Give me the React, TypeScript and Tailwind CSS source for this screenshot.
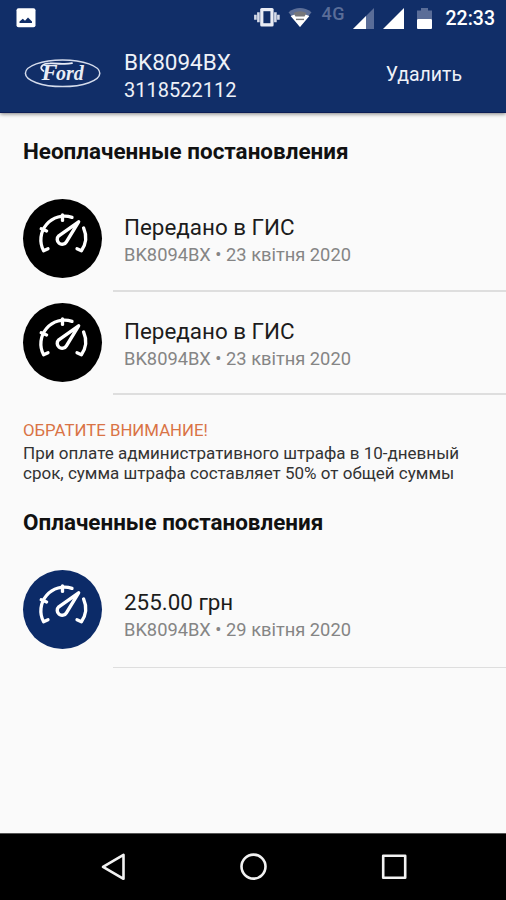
import React from 'react';

interface Fine {
    id: number;
    title: string;
    plate: string;
    date: string;
    paid: boolean;
}

const unpaid: Fine[] = [
    { id: 1, title: 'Передано в ГИС', plate: 'BK8094BX', date: '23 квітня 2020', paid: false },
    { id: 2, title: 'Передано в ГИС', plate: 'BK8094BX', date: '23 квітня 2020', paid: false },
];

const paid: Fine[] = [
    { id: 3, title: '255.00 грн', plate: 'BK8094BX', date: '29 квітня 2020', paid: true },
];

// --- ICONS ---
const GaugeIcon: React.FC = () => (
    <svg viewBox="0 0 79 79" className="w-full h-full" fill="none" stroke="#fff" strokeWidth="3.3" strokeLinecap="round" strokeLinejoin="round">
        <path d="M25 49.8 L20.6 51.8 A23.6 23.6 0 0 1 49 18.4" />
        <path d="M60.6 29 A23.6 23.6 0 0 1 58.4 51.8 L54 49.8" />
        <path d="M18.2 29.8 L23.6 32" />
        <path d="M39.5 16 V21.4" />
        <path d="M55.6 22.8 L35.8 36.8 A4.9 4.9 0 1 0 43.4 42.8 Z" strokeWidth="3.4" />
    </svg>
);

const FordLogo: React.FC = () => (
    <svg viewBox="0 0 78 30" className="w-[78px] h-[30px]">
        <ellipse cx="38.6" cy="15.3" rx="37.2" ry="13.3" fill="none" stroke="#d5dcec" strokeWidth="1.5" />
        <text y="22.4" fontFamily="'Liberation Serif', serif" fontStyle="italic" fontWeight="bold" fill="#e8ecf5">
            <tspan x="17.5" fontSize="24">F</tspan>
            <tspan x="32" fontSize="20">ord</tspan>
        </text>
        {/* flourish over the wordmark */}
        <path d="M19.5 13 C14.5 10 18 5.4 26 5.4 C35 5 40 7.2 48 5.2" fill="none" stroke="#e8ecf5" strokeWidth="1.8" strokeLinecap="round" />
    </svg>
);

// --- STATUS BAR ---
const StatusBar: React.FC = () => (
    <div className="flex items-center h-9 pl-4 pr-[11px]">
        <svg viewBox="0 0 20 20" className="w-5 h-5">
            <rect x="0.5" y="0.2" width="19" height="19" rx="2" fill="#fff" />
            <path d="M3.5 15 V13.4 L6.8 10.8 L9 12.8 L12 9.6 L16 13.4 V15 Z" fill="#112e68" />
        </svg>
        <svg viewBox="0 0 26 20" className="w-[26px] h-5 ml-auto">
            <rect x="6.2" y="0" width="13.4" height="18.4" rx="1.5" fill="#e9ecf4" />
            <rect x="9.4" y="3.2" width="7" height="12" fill="#112e68" />
            <path d="M4.4 4.2 V14.2 M21.4 4.2 V14.2 M1.4 6.7 V11.7 M24.4 6.7 V11.7" stroke="#d6dbe8" strokeWidth="2.6" />
        </svg>
        <svg viewBox="0 0 26 20" className="w-[26px] h-5 ml-[7px]">
            <path d="M1.5 4.2 Q13 -4.2 24.5 4.2 L13 19 Z" fill="#5d6f98" />
            <path d="M3.6 8 Q13 3.5 22.4 8 L13 19 Z" fill="#fff" />
            <path d="M6.5 5 Q13 1.4 19.5 5 L17.5 8.6 H8.5 Z" fill="#77777a" />
            <path d="M9 11.4 H17" stroke="#77777a" strokeWidth="1.4" />
        </svg>
        <span className="ml-[9px] -mt-[9px] w-[25px] text-[18px] leading-none font-medium tracking-[0.5px] text-[#5a6d98]">4G</span>
        <svg viewBox="0 0 21 21" className="w-[21px] h-[21px] ml-[6px]">
            <path d="M21 0 V21 H0 Z" fill="#5a6d98" />
            <path d="M13 8 V21 H0 Z" fill="#fff" />
        </svg>
        <svg viewBox="0 0 21 21" className="w-[21px] h-[21px] ml-[9px]">
            <path d="M21 0 V21 H0 Z" fill="#fff" />
        </svg>
        <svg viewBox="0 0 15 21" className="w-[15px] h-[21px] ml-[13px]">
            <path d="M0 2.4 H4 V0 H11 V2.4 H15 V11 H0 Z" fill="#5a6d98" />
            <rect y="11" width="15" height="10" rx="1" fill="#fff" />
        </svg>
        <span className="ml-[14px] pt-px text-[19.5px] leading-none font-medium text-white whitespace-nowrap">22:33</span>
    </div>
);

// --- HEADER ---
const Header: React.FC = () => (
    <header className="relative h-[113px] shrink-0 bg-[#112e68] border-b border-[#0c1c55] shadow-[0_1px_4px_rgba(0,0,0,0.5)]">
        <StatusBar />
        <div className="flex items-start h-[75px] pl-6 pr-11">
            <div className="w-[100px] pt-[22px]">
                <FordLogo />
            </div>
            <div className="flex-1 pt-3 text-[#eef1f8]">
                <div className="text-[22.5px] leading-7">BK8094BX</div>
                <div className="text-[20px] leading-7">3118522112</div>
            </div>
            <button className="pt-[27px] text-[19.5px] leading-6 text-[#eef1f8]">Удалить</button>
        </div>
    </header>
);

// --- FINES ---
const FineRow: React.FC<{ fine: Fine }> = ({ fine }) => (
    <li className={`flex pl-[22.5px] ${fine.paid ? 'h-[109px]' : 'h-[103.5px]'}`}>
        <div className={`w-[79px] h-[79px] mt-[11px] shrink-0 rounded-full ${fine.paid ? 'bg-[#0c2b68]' : 'bg-black'}`}>
            <GaugeIcon />
        </div>
        <div className={`flex-1 ml-[11px] pl-[11.5px] border-[#dedede] ${fine.paid ? 'pt-[29px] border-b' : 'pt-[25px] border-b-2'}`}>
            <div className="text-[22.4px] leading-7 text-[#1c1c1c]">{fine.title}</div>
            <div className="text-[18.3px] leading-[27px] text-[#858585]">{fine.plate} • {fine.date}</div>
        </div>
    </li>
);

const SectionTitle: React.FC<{ children: React.ReactNode }> = ({ children }) => (
    <h2 className="pl-[23px] text-[22.45px] leading-7 font-bold text-[#111]">{children}</h2>
);

// --- NAVIGATION BAR ---
const NavBar: React.FC = () => (
    <nav className="flex items-center justify-between h-[67px] shrink-0 pl-[100px] pr-[98px] bg-black border-t border-[#555]">
        <svg viewBox="0 0 28 28" className="w-7 h-7" fill="none" stroke="#f2f2f2" strokeWidth="2.6" strokeLinejoin="round">
            <path d="M23.5 1.8 V25.8 L3 13.8 Z" />
        </svg>
        <svg viewBox="0 0 28 28" className="w-7 h-7" fill="none" stroke="#f2f2f2" strokeWidth="2.6">
            <circle cx="13.5" cy="13.6" r="12" />
        </svg>
        <svg viewBox="0 0 28 28" className="w-7 h-7" fill="none" stroke="#f2f2f2" strokeWidth="2.6" strokeLinejoin="round">
            <rect x="3.2" y="2.8" width="22" height="22" />
        </svg>
    </nav>
);

export default function App() {
    return (
        <div className="flex flex-col w-[506px] h-[900px] overflow-hidden bg-[#fafafa] font-['Roboto',sans-serif]">
            <Header />
            <main className="flex-1 pt-6">
                <SectionTitle>Неоплаченные постановления</SectionTitle>
                <ul className="pt-[23px]">
                    {unpaid.map(f => <FineRow key={f.id} fine={f} />)}
                </ul>
                <div className="pl-[23px] pt-[23px]">
                    <p className="mb-px text-[16.8px] leading-6 text-[#d97345]">ОБРАТИТЕ ВНИМАНИЕ!</p>
                    <p className="text-[17px] leading-5 text-[#333]">
                        При оплате административного штрафа в 10-дневный<br />
                        срок, сумма штрафа составляет 50% от общей суммы
                    </p>
                </div>
                <div className="pt-[24.5px]">
                    <SectionTitle>Оплаченные постановления</SectionTitle>
                </div>
                <ul className="pt-[23px]">
                    {paid.map(f => <FineRow key={f.id} fine={f} />)}
                </ul>
            </main>
            <NavBar />
        </div>
    );
}
